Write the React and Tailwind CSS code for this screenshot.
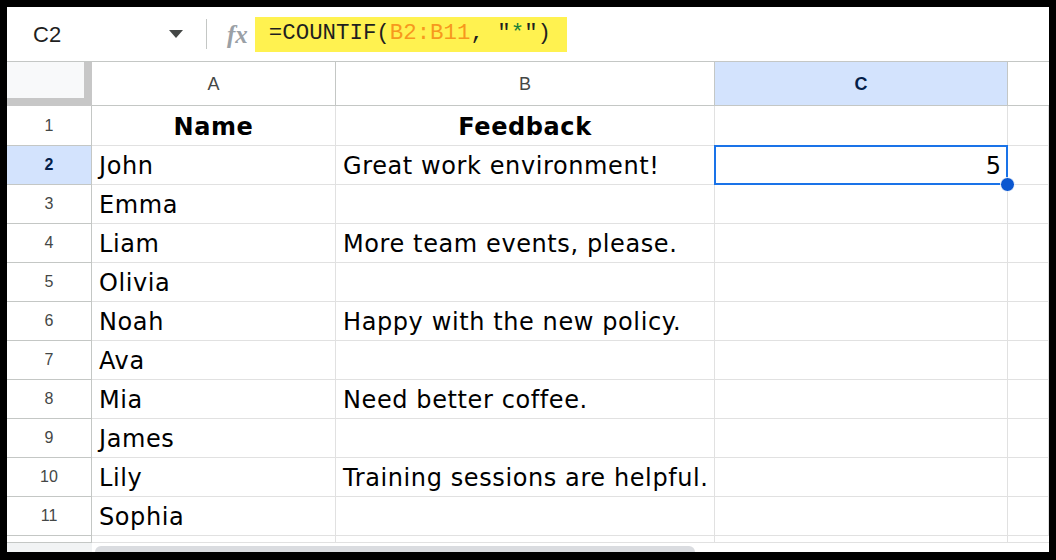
import React from 'react';

const rows = [
  ['Name', 'Feedback', true],
  ['John', 'Great work environment!'],
  ['Emma', ''],
  ['Liam', 'More team events, please.'],
  ['Olivia', ''],
  ['Noah', 'Happy with the new policy.'],
  ['Ava', ''],
  ['Mia', 'Need better coffee.'],
  ['James', ''],
  ['Lily', 'Training sessions are helpful.'],
  ['Sophia', ''],
];

const cellFont = { fontFamily: '"DejaVu Sans", Verdana, sans-serif' };

function Toolbar() {
  return (
    <div className="h-[55px] flex items-center border-b border-[#c4c7c5] shrink-0">
      <div className="w-[160px] pl-[26px] text-[22px] text-[#1f1f1f]" style={{ fontFamily: 'Arial, "Liberation Sans", sans-serif' }}>
        C2
      </div>
      <svg width="16" height="10" viewBox="0 0 16 10" className="ml-[1px]">
        <path d="M1 1 L15 1 L8 9 Z" fill="#444746" />
      </svg>
      <div className="w-px h-[30px] bg-[#c4c7c5] ml-[22px]" />
      <span
        className="ml-[20px] text-[25px] italic text-[#9aa0a6] font-bold leading-none"
        style={{ fontFamily: '"Liberation Serif", "Times New Roman", serif' }}
      >
        fx
      </span>
      <div
        className="ml-[7px] h-[35px] w-[312px] bg-[#fff250] flex items-center pl-[14px] text-[22.4px] text-[#1f1f1f]"
        style={{ fontFamily: '"Liberation Mono", "Courier New", monospace' }}
      >
        =COUNTIF(<span className="text-[#f7981d]">B2:B11</span>, "<span className="text-[#188038]">*</span>")
      </div>
    </div>
  );
}

function Grid() {
  const hdr = 'border-r border-b border-[#c4c7c5] flex items-center justify-center';
  const cell = 'border-r border-b border-[#e1e1e1] flex items-center overflow-hidden whitespace-nowrap text-[24px] tracking-[0.6px] text-black';
  return (
    <div
      className="grid"
      style={{
        gridTemplateColumns: '85px 244px 379px 293px 41px',
        gridTemplateRows: '44px 40px repeat(10, 39px) 7px',
      }}
    >
      {/* corner */}
      <div className="bg-[#f8f9fa] border-r-[8px] border-b-[8px] border-[#c7c7c7]" />
      <div className={hdr + ' pt-[2px] text-[18px] text-[#444746]'} style={{ fontFamily: 'Arial, "Liberation Sans", sans-serif' }}>A</div>
      <div className={hdr + ' pt-[2px] text-[18px] text-[#444746]'} style={{ fontFamily: 'Arial, "Liberation Sans", sans-serif' }}>B</div>
      <div className={hdr + ' pt-[2px] bg-[#d3e3fd] text-[18px] font-bold text-[#041e49]'} style={{ fontFamily: 'Arial, "Liberation Sans", sans-serif' }}>C</div>
      <div className="border-b border-[#c4c7c5]" />

      {rows.map((r, i) => {
        const n = i + 1;
        const sel = n === 2;
        return (
          <React.Fragment key={n}>
            <div
              className={
                hdr +
                ' text-[16px] ' +
                (sel ? 'bg-[#d3e3fd] font-bold text-[#041e49]' : 'text-[#444746]')
              }
              style={{ fontFamily: 'Arial, "Liberation Sans", sans-serif' }}
            >
              {n}
            </div>
            <div className={cell + ' pt-[2px]' + (r[2] ? ' justify-center font-bold' : ' pl-[7px]')} style={cellFont}>
              {r[0]}
            </div>
            <div className={cell + ' pt-[2px]' + (r[2] ? ' justify-center font-bold' : ' pl-[7px]')} style={cellFont}>
              {r[1]}
            </div>
            {sel ? (
              <div className="relative border-b border-r border-[#e1e1e1]">
                <div className="absolute -left-px -top-px w-[294px] h-[40px] border-2 border-[#1a73e8] flex items-center justify-end pr-[5px] pt-[2px] text-[24px] text-black" style={cellFont}>
                  5
                </div>
                <div className="absolute right-[-8px] bottom-[-8px] w-[15px] h-[15px] rounded-full bg-[#0b57d0] border border-white z-10" />
              </div>
            ) : (
              <div className={cell} />
            )}
            <div className={cell} />
          </React.Fragment>
        );
      })}

      <div className="border-r border-b border-[#c4c7c5]" />
      <div className="border-r border-b border-[#e1e1e1]" />
      <div className="border-r border-b border-[#e1e1e1]" />
      <div className="border-r border-b border-[#e1e1e1]" />
      <div className="border-b border-[#e1e1e1]" />
    </div>
  );
}

export default function App() {
  return (
    <div className="w-[1056px] h-[560px] bg-black pt-[7px] px-[7px] pb-[8px]">
      <div className="w-full h-full bg-white flex flex-col overflow-hidden">
        <Toolbar />
        <Grid />
        <div className="flex h-[9px]">
          <div className="w-[85px] bg-[#f1f3f4]" />
          <div className="ml-[3px] mt-[3px] w-[600px] h-[12px] rounded-[6px] bg-[#dadce0]" />
        </div>
      </div>
    </div>
  );
}
